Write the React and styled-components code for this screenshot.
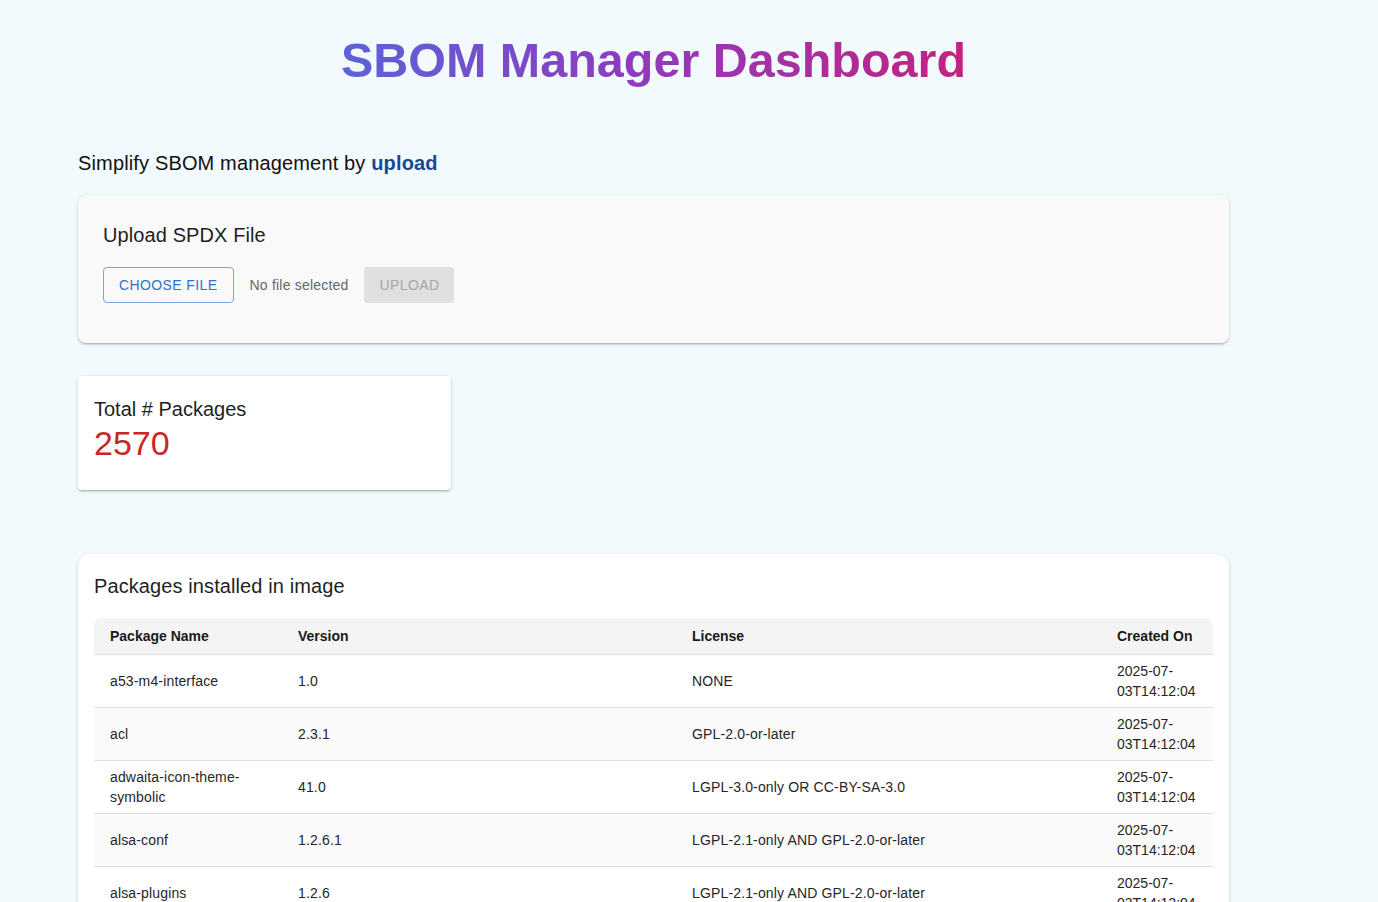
import React from "react";
import styled, { createGlobalStyle } from "styled-components";

const Global = createGlobalStyle`
  html, body { margin: 0; padding: 0; }
  body {
    background: #f3fafd;
    font-family: "Liberation Sans", Arial, sans-serif;
    color: #1f1f1f;
  }
`;

const Page = styled.div`
  width: 1151px;
  padding: 30px 0 40px 78px;
  display: flex;
  flex-direction: column;
`;

const Title = styled.h1`
  margin: 0;
  align-self: center;
  font-size: 48.5px;
  line-height: 60px;
  font-weight: 700;
  background: linear-gradient(90deg, #5a63d8 0%, #8d3cc0 45%, #c2237f 100%);
  -webkit-background-clip: text;
  background-clip: text;
  color: transparent;
`;

const Subtitle = styled.p`
  margin: 61px 0 0;
  font-size: 20px;
  line-height: 24px;
  letter-spacing: 0.15px;
  color: #111;
`;

const Strong = styled.span`
  font-weight: 700;
  color: #15489a;
`;

const Card = styled.section`
  background: ${(p) => p.$bg || "#fff"};
  border-radius: ${(p) => p.$radius || 4}px;
  box-shadow: 0 2px 2px -1px rgba(0,0,0,0.2), 0 1px 3px 0 rgba(0,0,0,0.14), 0 1px 5px 0 rgba(0,0,0,0.06);
  padding: ${(p) => p.$pad};
  width: ${(p) => p.$width || "auto"};
  margin-top: ${(p) => p.$mt || 0}px;
  box-sizing: border-box;
`;

const CardTitle = styled.h2`
  margin: 0;
  font-size: 20px;
  line-height: 24px;
  font-weight: 400;
  letter-spacing: 0.1px;
  color: #1f1f1f;
`;

const UploadRow = styled.div`
  display: flex;
  align-items: center;
  gap: 16px;
  margin-top: 20px;
`;

const Button = styled.button`
  height: 36px;
  padding: 0 15px;
  border-radius: 4px;
  font-family: "Liberation Sans", Arial, sans-serif;
  font-size: 14px;
  letter-spacing: 0.4px;
  text-transform: uppercase;
  box-sizing: border-box;
  border: ${(p) => (p.$variant === "outlined" ? "1px solid #7aa7da" : "none")};
  background: ${(p) => (p.$variant === "outlined" ? "transparent" : "#e0e0e0")};
  color: ${(p) => (p.$variant === "outlined" ? "#2f72c4" : "#a6a6a6")};
  cursor: pointer;
`;

const FileLabel = styled.span`
  font-size: 14px;
  letter-spacing: 0.2px;
  color: #666;
`;

const StatLabel = styled.div`
  font-size: 20px;
  line-height: 24px;
  color: #1f1f1f;
`;

const StatValue = styled.div`
  font-size: 34px;
  line-height: 44px;
  color: #c62828;
`;

const Table = styled.table`
  width: 100%;
  margin-top: 20px;
  border-collapse: separate;
  border-spacing: 0;
  table-layout: fixed;
  font-size: 14px;
`;

const Th = styled.th`
  text-align: left;
  font-weight: 700;
  background: #f4f4f4;
  padding: 8px 16px;
  line-height: 20px;
  border-bottom: 1px solid #e0e0e0;
  color: #1a1a1a;
  &:first-child { border-top-left-radius: 8px; }
  &:last-child { border-top-right-radius: 8px; }
`;

const Tr = styled.tr`
  background: ${(p) => (p.$odd ? "#fafafa" : "#fff")};
`;

const Td = styled.td`
  padding: 6px 16px;
  line-height: 20px;
  border-bottom: 1px solid #e0e0e0;
  color: #262626;
  vertical-align: middle;
  letter-spacing: ${(p) => (p.$date ? "0" : "0.15px")};
  word-wrap: break-word;
`;

const rows = [
  ["a53-m4-interface", "1.0", "NONE"],
  ["acl", "2.3.1", "GPL-2.0-or-later"],
  ["adwaita-icon-theme-symbolic", "41.0", "LGPL-3.0-only OR CC-BY-SA-3.0"],
  ["alsa-conf", "1.2.6.1", "LGPL-2.1-only AND GPL-2.0-or-later"],
  ["alsa-plugins", "1.2.6", "LGPL-2.1-only AND GPL-2.0-or-later"],
  ["alsa-ucm", "1.2.6.3", "BSD-3-Clause"],
  ["alsa-utils", "1.2.6", "GPL-2.0-or-later"],
];

export default function App() {
  return (
    <>
      <Global />
      <Page>
        <Title>SBOM Manager Dashboard</Title>
        <Subtitle>
          Simplify SBOM management by <Strong>upload</Strong>
        </Subtitle>
        <Card $bg="#f9f9f9" $radius={8} $pad="28px 24px 40px 25px" $mt={20}>
          <CardTitle>Upload SPDX File</CardTitle>
          <UploadRow>
            <Button $variant="outlined">Choose File</Button>
            <FileLabel>No file selected</FileLabel>
            <Button disabled>Upload</Button>
          </UploadRow>
        </Card>
        <Card $pad="21px 16px 25px" $width="373px" $mt={33}>
          <StatLabel>Total # Packages</StatLabel>
          <StatValue>2570</StatValue>
        </Card>
        <Card $radius={12} $pad="20px 16px 16px" $mt={64}>
          <CardTitle>Packages installed in image</CardTitle>
          <Table>
            <colgroup>
              <col style={{ width: "188px" }} />
              <col style={{ width: "394px" }} />
              <col style={{ width: "425px" }} />
              <col style={{ width: "112px" }} />
            </colgroup>
            <thead>
              <tr>
                <Th>Package Name</Th>
                <Th>Version</Th>
                <Th>License</Th>
                <Th>Created On</Th>
              </tr>
            </thead>
            <tbody>
              {rows.map((r, i) => (
                <Tr key={r[0]} $odd={i % 2 === 1}>
                  <Td>{r[0]}</Td>
                  <Td>{r[1]}</Td>
                  <Td>{r[2]}</Td>
                  <Td $date>2025-07-03T14:12:04</Td>
                </Tr>
              ))}
            </tbody>
          </Table>
        </Card>
      </Page>
    </>
  );
}
